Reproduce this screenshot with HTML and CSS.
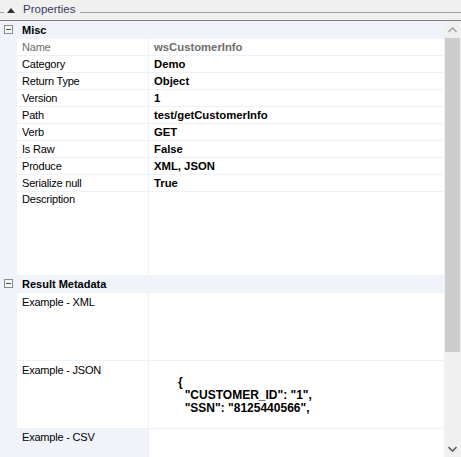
FILE: index.html
```html
<!DOCTYPE html>
<html>
<head>
<meta charset="utf-8">
<link rel="stylesheet" href="styles.css">
</head>
<body>
<div class="panel">
  <div class="header">
    <span class="hline short"></span>
    <span class="tri"></span>
    <span class="title">Properties</span>
    <span class="hline long"></span>
  </div>
  <div class="main">
    <div class="grid">
      <div class="cat">
        <div class="margin"><span class="box"></span></div>
        <div class="cat-label">Misc</div>
      </div>
      <div class="row readonly">
        <div class="margin"></div>
        <div class="name">Name</div>
        <div class="value">wsCustomerInfo</div>
      </div>
      <div class="row">
        <div class="margin"></div>
        <div class="name">Category</div>
        <div class="value">Demo</div>
      </div>
      <div class="row">
        <div class="margin"></div>
        <div class="name">Return Type</div>
        <div class="value">Object</div>
      </div>
      <div class="row">
        <div class="margin"></div>
        <div class="name">Version</div>
        <div class="value">1</div>
      </div>
      <div class="row">
        <div class="margin"></div>
        <div class="name">Path</div>
        <div class="value">test/getCustomerInfo</div>
      </div>
      <div class="row">
        <div class="margin"></div>
        <div class="name">Verb</div>
        <div class="value">GET</div>
      </div>
      <div class="row">
        <div class="margin"></div>
        <div class="name">Is Raw</div>
        <div class="value">False</div>
      </div>
      <div class="row">
        <div class="margin"></div>
        <div class="name">Produce</div>
        <div class="value">XML, JSON</div>
      </div>
      <div class="row">
        <div class="margin"></div>
        <div class="name">Serialize null</div>
        <div class="value">True</div>
      </div>
      <div class="row desc">
        <div class="margin"></div>
        <div class="name">Description</div>
        <div class="value"></div>
      </div>
      <div class="cat">
        <div class="margin"><span class="box"></span></div>
        <div class="cat-label">Result Metadata</div>
      </div>
      <div class="row tall">
        <div class="margin"></div>
        <div class="name">Example - XML</div>
        <div class="value"></div>
      </div>
      <div class="row tall">
        <div class="margin"></div>
        <div class="name">Example - JSON</div>
        <div class="value json"><div class="jl brace">{</div><div class="jl">  "CUSTOMER_ID": "1",</div><div class="jl">  "SSN": "8125440566",</div></div>
      </div>
      <div class="row last">
        <div class="margin"></div>
        <div class="name shaded">Example - CSV</div>
        <div class="value"></div>
      </div>
    </div>
    <div class="scrollbar">
      <div class="sbtn up">
        <svg width="9" height="6" viewBox="0 0 9 6"><path d="M0.5 5 L4.5 1 L8.5 5" fill="none" stroke="#a6a6a6" stroke-width="1.6"/></svg>
      </div>
      <div class="thumb"></div>
      <div class="track"></div>
      <div class="sbtn down">
        <svg width="9" height="6" viewBox="0 0 9 6"><path d="M0.5 1 L4.5 5 L8.5 1" fill="none" stroke="#606060" stroke-width="1.6"/></svg>
      </div>
    </div>
  </div>
</div>
</body>
</html>
```
FILE: styles.css
```css
* { box-sizing: border-box; }
html, body {
  margin: 0;
  padding: 0;
  width: 461px;
  height: 457px;
  overflow: hidden;
  background: #f0f0f0;
  font-family: "Liberation Sans", Arial, sans-serif;
  font-size: 11px;
  color: #000;
}
.panel {
  display: flex;
  flex-direction: column;
  height: 457px;
}
.header {
  height: 21px;
  display: flex;
  align-items: flex-start;
  border-bottom: 1px solid #828282;
  background: #f0f0f0;
}
.hline {
  height: 1px;
  background: #a0a0a0;
  margin-top: 12px;
}
.hline.short { width: 4px; }
.hline.long { flex: 1; margin-left: 5px; }
.tri {
  width: 0;
  height: 0;
  margin-left: 3px;
  margin-top: 8px;
  border-left: 4px solid transparent;
  border-right: 4px solid transparent;
  border-bottom: 5px solid #333;
}
.title {
  margin-left: 8px;
  margin-top: 3px;
  font-size: 11.5px;
  line-height: 12px;
  color: #3a3a5e;
}
.main {
  flex: 1;
  display: flex;
  overflow: hidden;
}
.grid {
  width: 444px;
  background: #fff;
  overflow: hidden;
}
.cat {
  height: 18px;
  display: flex;
  background: #f0f4fa;
}
.margin {
  width: 17px;
  flex: none;
  background: #f0f4fa;
  position: relative;
}
.box {
  position: absolute;
  left: 4px;
  top: 4px;
  width: 9px;
  height: 9px;
  border: 1px solid #8c8c8c;
  background: #f7f7f7;
}
.box::after {
  content: "";
  position: absolute;
  left: 1px;
  top: 3px;
  width: 5px;
  height: 1px;
  background: #505050;
}
.cat-label {
  padding-left: 5px;
  line-height: 18px;
  font-weight: bold;
}
.row {
  display: grid;
  grid-template-columns: 17px 132px 1fr;
  height: 17px;
}
.name, .value {
  border-bottom: 1px solid #edf1f8;
  line-height: 16px;
  white-space: nowrap;
  overflow: hidden;
}
.name {
  padding-left: 5px;
  border-right: 1px solid #edf1f8;
  letter-spacing: -0.2px;
}
.value {
  padding-left: 5px;
  font-weight: bold;
  font-size: 11.3px;
}
.readonly .name, .readonly .value { color: #6d6d6d; }
.desc { height: 83px; }
.desc .name, .desc .value { border-bottom-color: #fff; }
.desc .name { padding-top: 0; line-height: 14px; }
.tall { height: 68px; }
.tall .name { padding-top: 1px; }
.last { height: 40px; }
.last .name, .last .value { border-bottom: none; }
.shaded { background: #f0f4fa; }
.json {
  padding-left: 29px;
  padding-top: 15px;
  font-size: 12px;
}
.jl {
  white-space: pre;
  line-height: 13px;
}
.scrollbar {
  width: 17px;
  display: flex;
  flex-direction: column;
  background: #f0f0f0;
}
.sbtn {
  height: 17px;
  display: flex;
  align-items: center;
  justify-content: center;
  flex: none;
}
.sbtn svg { display: block; }
.thumb {
  height: 314px;
  margin: 0 1px;
  background: #cdcdcd;
  flex: none;
}
.track { flex: 1; }
```
